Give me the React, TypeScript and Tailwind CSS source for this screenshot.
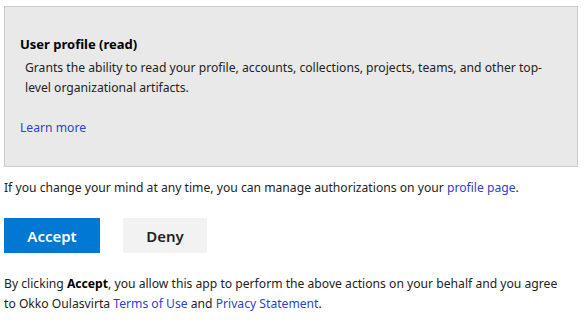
import React from "react";

export default function App() {
  const font = { fontFamily: '"Noto Sans", "Open Sans", sans-serif' };
  return (
    <div className="w-[585px] h-[330px] bg-white pl-[4px] pt-[6px] text-[12.15px] leading-[20px] text-[#222]" style={font}>
      <div className="w-[574px] h-[161px] border border-[#cccccc] bg-[#e9e9e9] pl-[15px] pr-[10px] pt-[27px]">
        <div className="font-bold text-black text-[13px]">User profile (read)</div>
        <div className="mt-[4px] pl-[5px]">
          Grants the ability to read your profile, accounts, collections, projects, teams, and other top-level organizational artifacts.
        </div>
        <div className="mt-[20px] text-[#2e3fd1]">Learn more</div>
      </div>
      <div className="mt-[11px]">
        If you change your mind at any time, you can manage authorizations on your{" "}
        <span className="text-[#2e3fd1]">profile page</span>.
      </div>
      <div className="mt-[20px] flex gap-[23px]">
        <button className="w-[96px] h-[35px] bg-[#0078d4] text-white font-semibold text-[15px]">Accept</button>
        <button className="w-[84px] h-[35px] bg-[#f2f2f2] text-[#222] font-semibold text-[15px]">Deny</button>
      </div>
      <div className="mt-[21px] w-[560px]">
        By clicking <span className="font-bold text-black">Accept</span>, you allow this app to perform the above actions on your behalf and you agree to Okko Oulasvirta{" "}
        <span className="text-[#2e3fd1]">Terms of Use</span> and{" "}
        <span className="text-[#2e3fd1]">Privacy Statement</span>.
      </div>
    </div>
  );
}
